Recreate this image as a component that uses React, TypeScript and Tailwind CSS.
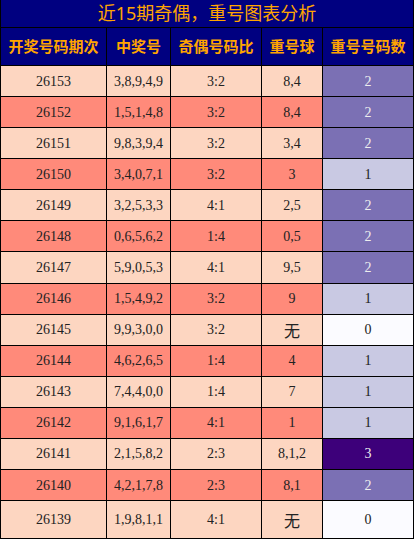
import React from "react";

type Row = [string, string, string, string, number];

const rows: Row[] = [
  ["26153", "3,8,9,4,9", "3:2", "8,4", 2],
  ["26152", "1,5,1,4,8", "3:2", "8,4", 2],
  ["26151", "9,8,3,9,4", "3:2", "3,4", 2],
  ["26150", "3,4,0,7,1", "3:2", "3", 1],
  ["26149", "3,2,5,3,3", "4:1", "2,5", 2],
  ["26148", "0,6,5,6,2", "1:4", "0,5", 2],
  ["26147", "5,9,0,5,3", "4:1", "9,5", 2],
  ["26146", "1,5,4,9,2", "3:2", "9", 1],
  ["26145", "9,9,3,0,0", "3:2", "无", 0],
  ["26144", "4,6,2,6,5", "1:4", "4", 1],
  ["26143", "7,4,4,0,0", "1:4", "7", 1],
  ["26142", "9,1,6,1,7", "4:1", "1", 1],
  ["26141", "2,1,5,8,2", "2:3", "8,1,2", 3],
  ["26140", "4,2,1,7,8", "2:3", "8,1", 2],
  ["26139", "1,9,8,1,1", "4:1", "无", 0],
];

const countCls: Record<number, string> = {
  0: "bg-[#fbfbff] text-[#222]",
  1: "bg-[#c9c9e3] text-[#222]",
  2: "bg-[#7b70b4] text-[#eeeeee]",
  3: "bg-[#3d007a] text-[#eeeeee]",
};

const widths = ["w-[107px] border-l", "w-[64px]", "w-[91px]", "w-[61px]", "w-[91px]"];

function DataRow({ r, idx, last }: { r: Row; idx: number; last: boolean }) {
  const bg = idx % 2 === 0 ? "bg-[#fdd6c1]" : "bg-[#ff8a7a]";
  return (
    <div className={`${last ? "h-[38px] shrink-0" : "flex-1"} flex border-b border-black text-[14px] text-[#222]`}>
      {[r[0], r[1], r[2], r[3]].map((v, i) => (
        <div key={i} className={`${widths[i]} ${bg} shrink-0 border-r border-black flex items-center justify-center`}>
          {v === "无" ? (
            <span className="text-[16px]" style={{ fontFamily: '"Noto Sans CJK SC", sans-serif' }}>
              无
            </span>
          ) : (
            v
          )}
        </div>
      ))}
      <div className={`${widths[4]} ${countCls[r[4]]} shrink-0 border-r border-black flex items-center justify-center`}>
        {r[4]}
      </div>
    </div>
  );
}

export default function App() {
  const headers = ["开奖号码期次", "中奖号", "奇偶号码比", "重号球", "重号号码数"];
  return (
    <div
      className="w-[414px] h-[539px] flex flex-col bg-white"
      style={{ fontFamily: '"Liberation Serif", "Noto Sans CJK SC", serif' }}
    >
      <div
        className="h-[28px] shrink-0 bg-[#000080] border-l border-r border-b border-black flex items-center justify-center text-[18px] text-[#ffa500]"
        style={{ fontFamily: '"Noto Sans", "Noto Sans CJK SC", sans-serif' }}
      >
        近15期奇偶，重号图表分析
      </div>
      <div className="h-[38px] shrink-0 flex border-b border-black bg-[#000080]">
        {headers.map((h, i) => (
          <div
            key={i}
            className={`${widths[i]} shrink-0 border-r border-black flex items-center justify-center text-[15px] font-bold text-[#ffa500]`}
            style={{ fontFamily: '"Noto Sans CJK SC", sans-serif' }}
          >
            {h}
          </div>
        ))}
      </div>
      <div className="h-[435px] shrink-0 flex flex-col">
        {rows.slice(0, 14).map((r, idx) => (
          <DataRow key={r[0]} r={r} idx={idx} last={false} />
        ))}
      </div>
      <DataRow r={rows[14]} idx={14} last={true} />
    </div>
  );
}
